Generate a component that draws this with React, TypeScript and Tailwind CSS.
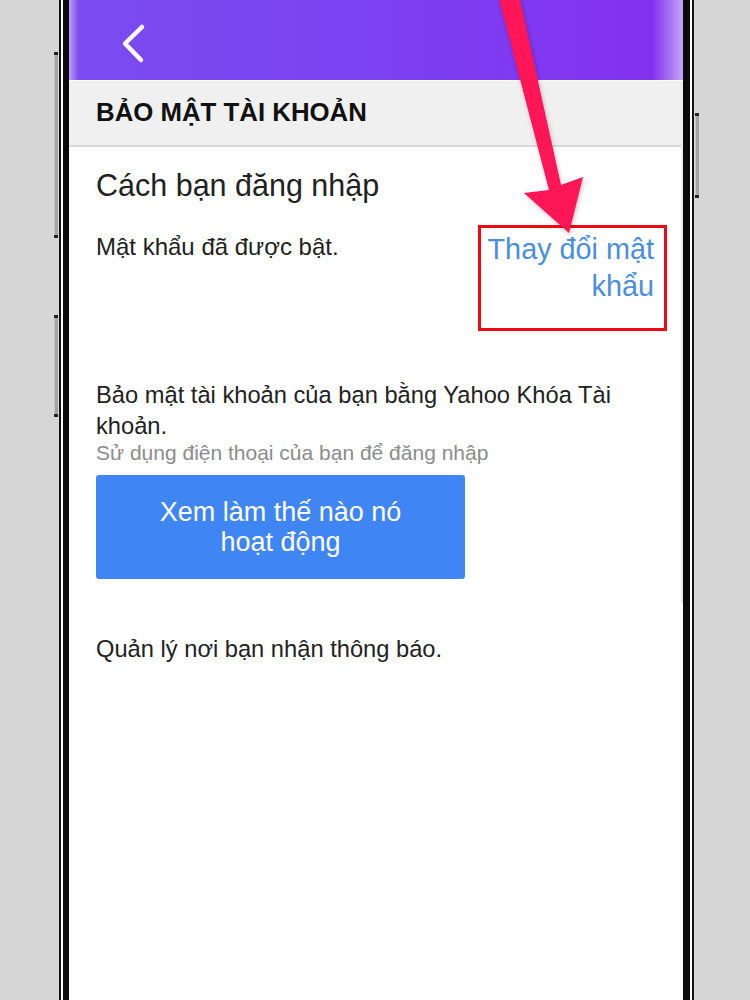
import React from "react";

function SideButton({ h, mt }: { h: number; mt: string }) {
  return (
    <div className={`${mt} w-[5px] flex flex-col`}>
      <div className="h-[3px] w-[4px] bg-[#222]" />
      <div className="w-[4px] bg-[#a3a3a3] border-l border-[#c8c8c8]" style={{ height: h - 6 }} />
      <div className="h-[3px] w-[4px] bg-[#222]" />
    </div>
  );
}

export default function App() {
  return (
    <div className="relative w-[750px] h-[1000px] overflow-hidden bg-[#d6d6d6] font-['Liberation_Sans',Arial,sans-serif]">
      <div className="flex flex-row items-start pl-[54px]">
        {/* left side buttons */}
        <div className="flex flex-col w-[5px]">
          <SideButton h={186} mt="mt-[52px]" />
          <SideButton h={102} mt="mt-[77px]" />
        </div>

        {/* phone body */}
        <div className="h-[1000px] border-x-2 border-[#111] bg-white px-[2px] flex">
          <div className="h-full border-l-[6px] border-r-[7px] border-[#0a0a0a] flex">
            {/* screen */}
            <div className="relative w-[614px] h-full bg-white flex flex-col">
              {/* purple header */}
              <div className="h-[80px] flex items-center pl-[51px] bg-[linear-gradient(90deg,#b89ff7_0px,#7c4bf1_10px,#7b43f1_45%,#8331ef_95%,#c4a4f7_100%)]">
                <svg width="28" height="44" viewBox="0 0 28 44" className="overflow-visible">
                  <path d="M22 9 L5 25.5 L21 42" fill="none" stroke="#ffffff" strokeWidth="4.5" strokeLinecap="round" strokeLinejoin="round" />
                </svg>
              </div>

              {/* section title bar */}
              <div className="mt-[1px] h-[66px] bg-[#f0f0f0] border-b-2 border-[#d9d9d9] flex items-center pl-[27px]">
                <span className="text-[25.8px] font-bold text-[#111] leading-none">BẢO MẬT TÀI KHOẢN</span>
              </div>

              {/* content */}
              <div className="flex flex-col pl-[27px] pr-[29px]">
                <div className="mt-[20px] text-[30.5px] leading-[36px] text-[#222]">Cách bạn đăng nhập</div>

                <div className="mt-[28px] flex flex-row justify-between items-start">
                  <div className="text-[24px] leading-[31px] text-[#222]">Mật khẩu đã được bật.</div>
                  <div className="relative w-[180px] text-right text-[28.8px] leading-[37px] text-[#4a8ee0]">
                    Thay đổi mật khẩu
                    <div className="absolute left-[4px] top-[-6px] w-[189px] h-[106px] border-[3px] border-[#ee0a14]" />
                  </div>
                </div>

                <div className="mt-[75px] text-[23.7px] leading-[31px] text-[#222]">
                  Bảo mật tài khoản của bạn bằng Yahoo Khóa Tài khoản.
                </div>
                <div className="text-[21px] leading-[22px] text-[#8c8c8c]">Sử dụng điện thoại của bạn để đăng nhập</div>

                <div className="mt-[11px] w-[369px] h-[104px] rounded-[3px] bg-[#3f86f4] flex items-center justify-center px-[54px] text-center text-[27px] leading-[30px] text-white">
                  Xem làm thế nào nó hoạt động
                </div>

                <div className="mt-[55px] text-[23.7px] leading-[31px] text-[#222]">Quản lý nơi bạn nhận thông báo.</div>
              </div>

              {/* scroll indicator */}
              <div className="absolute right-0 top-[81px] w-[2px] h-[522px] bg-[#ececec]" />
            </div>
          </div>
        </div>

        {/* right side button */}
        <div className="flex flex-col w-[5px] ml-[1px]">
          <SideButton h={85} mt="mt-[113px]" />
        </div>
      </div>

      {/* annotation arrow */}
      <svg className="absolute left-0 top-0 pointer-events-none" width="750" height="1000" viewBox="0 0 750 1000">
        <defs>
          <filter id="sh" x="-20%" y="-20%" width="140%" height="140%">
            <feDropShadow dx="1" dy="2" stdDeviation="2" floodColor="#000" floodOpacity="0.25" />
          </filter>
        </defs>
        <polygon
          points="498,-5 519,-5 561,185 583,177 569,233 524,193 549,190"
          fill="#ff1257"
          filter="url(#sh)"
        />
      </svg>
    </div>
  );
}
